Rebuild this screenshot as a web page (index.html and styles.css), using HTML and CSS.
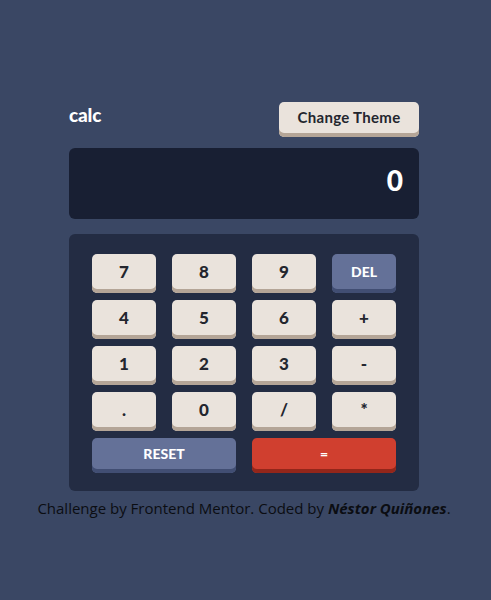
FILE: index.html
```html
<!DOCTYPE html>
<html lang="en">
<head>
<meta charset="utf-8">
<title>calc</title>
<link rel="stylesheet" href="styles.css">
</head>
<body>
<main class="calc">
  <header class="top">
    <h1 class="logo">calc</h1>
    <button class="theme-btn">Change Theme</button>
  </header>
  <div class="screen">0</div>
  <div class="keypad">
    <button class="key">7</button>
    <button class="key">8</button>
    <button class="key">9</button>
    <button class="key key-blue">DEL</button>
    <button class="key">4</button>
    <button class="key">5</button>
    <button class="key">6</button>
    <button class="key">+</button>
    <button class="key">1</button>
    <button class="key">2</button>
    <button class="key">3</button>
    <button class="key">-</button>
    <button class="key">.</button>
    <button class="key">0</button>
    <button class="key">/</button>
    <button class="key">*</button>
    <button class="key key-wide key-blue">RESET</button>
    <button class="key key-wide key-red">=</button>
  </div>
</main>
<footer class="credit">Challenge by Frontend Mentor. Coded by <a class="author">Néstor Quiñones</a>.</footer>
</body>
</html>
```

FILE: styles.css
```css
html, body {
  margin: 0;
  padding: 0;
}
body {
  background: #3a4764;
  min-height: 600px;
  padding-right: 3px;
  padding-top: 102px;
  box-sizing: border-box;
  font-family: "Lato", "Noto Sans", sans-serif;
}
.calc {
  width: 350px;
  margin: 0 auto;
}
.top {
  display: flex;
  justify-content: space-between;
  align-items: center;
  height: 35px;
}
.logo {
  margin: 0;
  color: #fff;
  font-size: 19px;
  font-weight: 900;
  letter-spacing: -0.2px;
  line-height: 1;
  padding-bottom: 10px;
}
.theme-btn {
  width: 140px;
  height: 35px;
  border: 0;
  border-radius: 5px;
  background: #eae3dc;
  box-shadow: inset 0 -4px 0 #b4a597;
  padding: 0 0 5px;
  font-family: inherit;
  font-size: 15px;
  font-weight: 700;
  letter-spacing: 0.3px;
  color: #23262e;
}
.screen {
  margin-top: 11px;
  height: 71px;
  border-radius: 6px;
  background: #181f33;
  color: #fff;
  font-size: 28px;
  font-weight: 900;
  display: flex;
  align-items: center;
  justify-content: flex-end;
  padding: 0 16px 7px 0;
  box-sizing: border-box;
}
.keypad {
  margin-top: 15px;
  background: #232c43;
  border-radius: 6px;
  padding: 20px 23px 18px;
  display: grid;
  grid-template-columns: repeat(4, 64px);
  grid-template-rows: repeat(4, 39px) 35px;
  column-gap: 16px;
  row-gap: 7px;
}
.key {
  border: 0;
  border-radius: 5px;
  background: #eae3dc;
  box-shadow: inset 0 -4px 0 #b4a597;
  padding: 0 0 4px;
  font-family: inherit;
  font-size: 17px;
  font-weight: 900;
  color: #23262e;
}
.key-blue {
  background: #647198;
  box-shadow: inset 0 -4px 0 #414e73;
  color: #fff;
  font-size: 14px;
}
.key-red {
  background: #d03f2f;
  box-shadow: inset 0 -4px 0 #93261a;
  color: #fff;
  font-size: 14px;
}
.key-wide {
  grid-column: span 2;
}
.credit {
  margin-top: 7px;
  text-align: center;
  font-family: "Open Sans", sans-serif;
  font-size: 15px;
  color: #0b0d12;
}
.author {
  font-weight: 700;
  font-style: italic;
}
```
